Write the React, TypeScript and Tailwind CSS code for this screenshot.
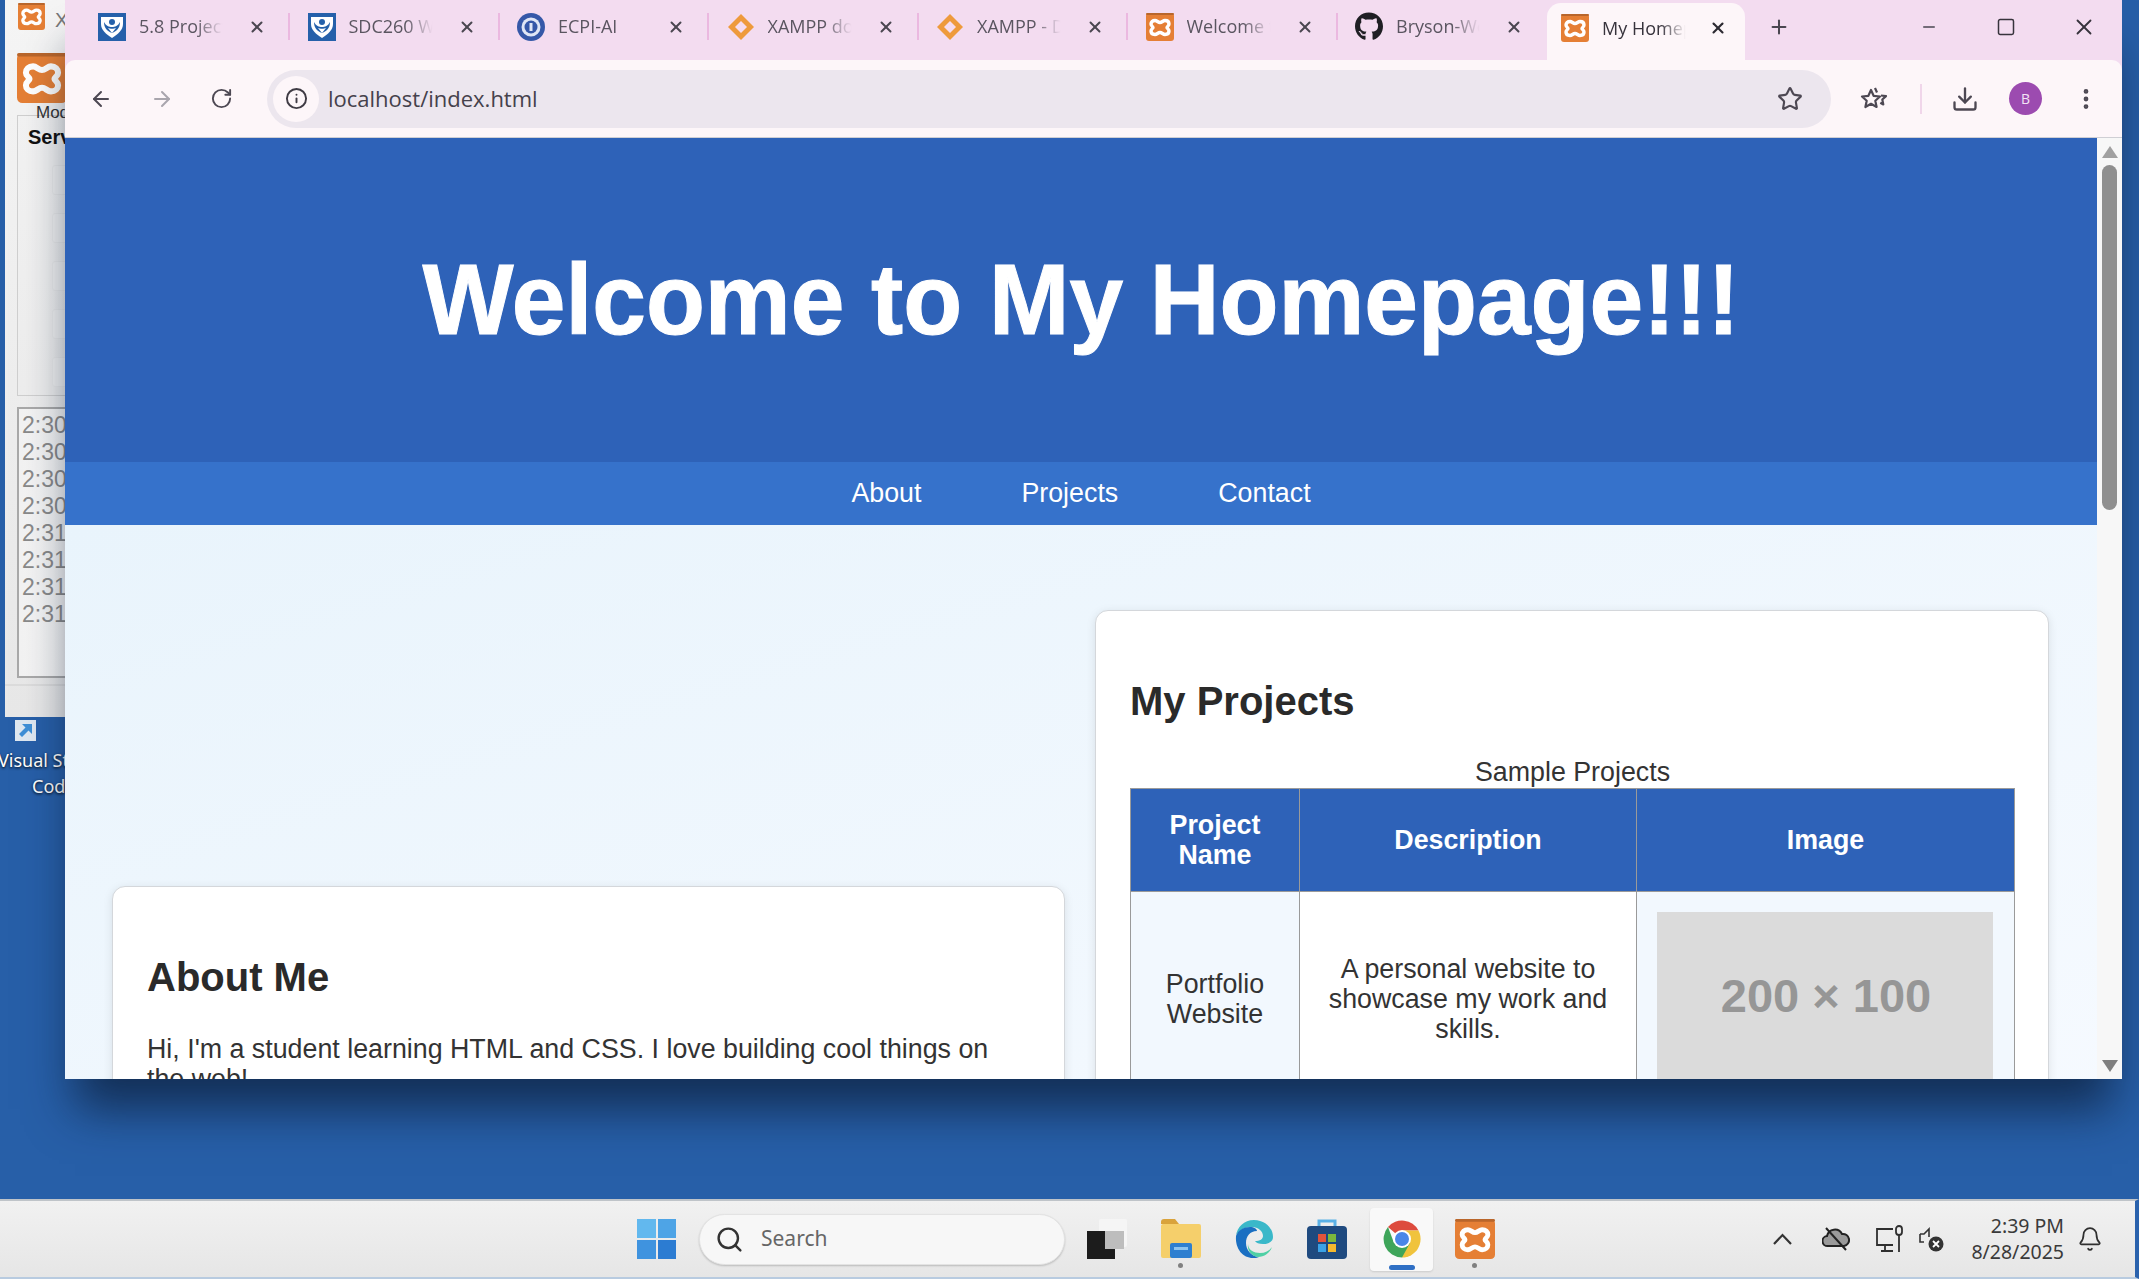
import { FaGithub } from 'react-icons/fa';
import { ArrowLeft, ArrowRight, Bell, Download, EllipsisVertical, Info, Minus, Plus, RotateCw, Search, Square, Star, X } from 'lucide-react';

function XamppLogo({ size = 28, className = '' }: { size?: number; className?: string }) {
    return (
        <svg width={size} height={size} viewBox="0 0 28 28" className={className}>
            <rect width="28" height="28" rx="3" fill="#e57f35" />
            <rect width="28" height="2" rx="1" fill="#b9662b" />
            <path
                d="M9 7.500C11 7.500 12 9.500 14 9.500S17 7.500 19 7.500C21.500 7.500 23 9 23 11 23 13 21 13.500 21 14.500S23 16 23 18C23 20 21.500 21.500 19 21.500 17 21.500 16 19.500 14 19.500S11 21.500 9 21.500C6.500 21.500 5 20 5 18 5 16 7 15.500 7 14.500S5 13 5 11C5 9 6.500 7.500 9 7.500Z"
                fill="#e57f35"
                stroke="#fff"
                strokeWidth="3.400"
            />
        </svg>
    );
}

function ShieldIcon() {
    return (
        <svg width="28" height="28" viewBox="0 0 28 28">
            <rect width="28" height="28" fill="#2560aa" />
            <path d="M3 4h22v7c0 6-5 10-11 14C8 21 3 17 3 11z" fill="#fff" />
            <circle cx="14" cy="9" r="3" fill="#2560aa" />
            <path d="M6 9c2 4 5 5 8 5s6-1 8-5c0 6-3 9-8 11-5-2-8-5-8-11z" fill="#2560aa" />
            <path d="M10 15c2 1 6 1 8 0l-4 5z" fill="#fff" />
        </svg>
    );
}

function EcpiIcon() {
    return (
        <svg width="28" height="28" viewBox="0 0 28 28">
            <circle cx="14" cy="14" r="14" fill="#3558a8" />
            <circle cx="14" cy="14" r="9.500" fill="#dfe6f5" />
            <circle cx="14" cy="14" r="6.500" fill="#3558a8" />
            <rect x="12.500" y="10" width="3" height="8" fill="#dfe6f5" />
        </svg>
    );
}

function DiamondIcon() {
    return (
        <svg width="28" height="28" viewBox="0 0 28 28">
            <path d="M14 1l13 13-13 13L1 14z" fill="#ee9a3c" />
            <path d="M14 8l6 6-6 6-6-6z" fill="#f5dcef" />
        </svg>
    );
}

const tabs = [
    { title: '5.8 Project', icon: <ShieldIcon /> },
    { title: 'SDC260 Week', icon: <ShieldIcon /> },
    { title: 'ECPI-AI', icon: <EcpiIcon /> },
    { title: 'XAMPP doc', icon: <DiamondIcon /> },
    { title: 'XAMPP - Download', icon: <DiamondIcon /> },
    { title: 'Welcome to', icon: <XamppLogo /> },
    { title: 'Bryson-Web', icon: <FaGithub size={29} className="text-[#1f1f24]" /> },
];

function Tab({ title, icon }: { title: string; icon: React.ReactNode }) {
    return (
        <div className="flex h-[53px] w-[190px] shrink-0 items-center">
            <div className="flex h-[28px] w-[28px] shrink-0 items-center justify-center">{icon}</div>
            <div className="ml-[13px] w-[91px] overflow-hidden whitespace-nowrap text-[18px] text-[#5a5560] [mask-image:linear-gradient(to_right,black_62%,transparent_92%)]">
                {title}
            </div>
            <X size={18} strokeWidth={2.6} className="ml-[18px] shrink-0 text-[#4a4650]" />
        </div>
    );
}

function TabStrip() {
    return (
        <div className="flex h-[60px] shrink-0 items-start pl-[33px]">
            {tabs.map((t, i) => (
                <div key={i} className="flex w-[209.5px] shrink-0 items-center">
                    <Tab title={t.title} icon={t.icon} />
                    {i < tabs.length - 1 && <div className="h-[27px] w-[2px] bg-[#ebb8e0]" />}
                </div>
            ))}
            <div className="-ml-[17.5px] mt-[3px] flex h-[57px] w-[198px] shrink-0 items-center rounded-t-[14px] bg-[#fdf6f9] pb-[7px] pl-[14px]">
                <XamppLogo />
                <div className="ml-[13px] w-[91px] overflow-hidden whitespace-nowrap text-[18px] text-[#37333c] [mask-image:linear-gradient(to_right,black_65%,transparent_92%)]">
                    My Homepage
                </div>
                <X size={18} strokeWidth={2.8} className="ml-[16px] shrink-0 text-[#2c2931]" />
            </div>
            <div className="flex h-[53px] items-center">
                <Plus size={22} strokeWidth={2.2} className="ml-[23px] text-[#4a4650]" />
                <Minus size={18} className="ml-[130px] text-[#4a4650]" />
                <Square size={20} strokeWidth={1.8} className="ml-[58px] text-[#37333c]" />
                <X size={26} strokeWidth={1.7} className="ml-[55px] text-[#37333c]" />
            </div>
        </div>
    );
}

function ReadingListIcon() {
    return (
        <svg width="30" height="28" viewBox="0 0 30 28" className="ml-[28px] shrink-0" fill="none" stroke="#4d4853" strokeWidth="2.200" strokeLinejoin="round">
            <path d="M12 5l2.600 5.800 6.400.7-4.700 4.200 1.300 6.300-5.600-3.200L6.400 22l1.300-6.300L3 11.500l6.400-.7z" />
            <path d="M16 3l2 4.500M22 10.500l5 .6-3.700 3.400 1 5-3-1.700" />
        </svg>
    );
}

function Toolbar() {
    return (
        <div className="flex h-[78px] shrink-0 items-center rounded-t-[10px] border-b border-b-[#cfcfd4] bg-[#fdf6f9] pl-[24px]">
            <ArrowLeft size={24} strokeWidth={2} className="text-[#4d4853]" />
            <ArrowRight size={24} strokeWidth={2} className="ml-[37px] text-[#a9a5ad]" />
            <RotateCw size={23} strokeWidth={2} className="ml-[36px] text-[#4d4853]" />
            <div className="ml-[34px] flex h-[58px] w-[1564px] shrink-0 items-center rounded-full bg-[#ece6ee] pl-[6px]">
                <div className="flex h-[46px] w-[46px] items-center justify-center rounded-full bg-[#fdf6f9]">
                    <Info size={23} strokeWidth={2} className="text-[#3f3b44]" />
                </div>
                <span className="ml-[9px] text-[22px] text-[#45414b]">localhost/index.html</span>
                <Star size={26} strokeWidth={2} className="ml-auto mr-[28px] text-[#4d4853]" />
            </div>
            <ReadingListIcon />
            <div className="ml-[31px] h-[30px] w-[2px] shrink-0 bg-[#f0d6ea]" />
            <Download size={28} strokeWidth={2} className="ml-[29px] shrink-0 text-[#4d4853]" />
            <div className="ml-[30px] flex h-[33px] w-[33px] shrink-0 items-center justify-center rounded-full bg-[#9c4bb0] text-[14px] text-[#f3e3f5]">B</div>
            <EllipsisVertical size={26} strokeWidth={2.4} className="ml-[31px] shrink-0 text-[#4d4853]" />
        </div>
    );
}

function Scrollbar() {
    return (
        <div className="flex w-[25px] shrink-0 flex-col items-center bg-[#f7f7f7] pt-[8px]">
            <div className="h-0 w-0 border-x-[8px] border-b-[12px] border-x-transparent border-b-[#a0a0a0]" />
            <div className="mt-[7px] h-[345px] w-[15px] rounded-full bg-[#8f8f8f]" />
            <div className="mb-[7px] mt-auto h-0 w-0 border-x-[8px] border-t-[12px] border-x-transparent border-t-[#7f7f7f]" />
        </div>
    );
}

function Card({ children, className }: { children: React.ReactNode; className: string }) {
    return (
        <section className={`h-fit rounded-[13px] border border-[#d4d7db] bg-white px-[34px] pt-[65px] pb-[30px] shadow-[0_2px_10px_rgba(0,0,0,0.1)] ${className}`}>
            {children}
        </section>
    );
}

function Page() {
    return (
        <div className="min-w-0 flex-1 overflow-hidden bg-[#eaf4fc] font-['Liberation_Sans',Arial,sans-serif] text-[#333333]">
            <header className="flex h-[324px] items-center justify-center bg-[#2e62b8]">
                <h1 className="scale-y-[1.04] text-[96.5px] font-bold leading-none text-white [-webkit-text-stroke:1px_white]">Welcome to My Homepage!!!</h1>
            </header>
            <nav className="flex h-[63px] items-center justify-center gap-[100px] bg-[#3672cb] text-[26.8px] text-white">
                <span>About</span>
                <span>Projects</span>
                <span>Contact</span>
            </nav>
            <main className="flex items-start gap-[30px] bg-gradient-to-br from-[#e9f4fc] to-[#f6faff] pl-[47px] pt-[85px]">
                <Card className="mt-[276px] w-[953px]">
                    <h2 className="text-[40px] font-bold leading-[50px] text-[#2a2a2a]">About Me</h2>
                    <p className="mt-[32px] text-[26.8px] leading-[30px]">Hi, I'm a student learning HTML and CSS. I love building cool things on the web!</p>
                </Card>
                <Card className="w-[954px]">
                    <h2 className="text-[40px] font-bold leading-[50px] text-[#2a2a2a]">My Projects</h2>
                    <table className="mt-[30px] w-[884px] table-fixed border-collapse text-center text-[26.8px] leading-[30px]">
                        <caption className="h-[32px] leading-[32px]">Sample Projects</caption>
                        <colgroup>
                            <col className="w-[169px]" />
                            <col className="w-[337px]" />
                            <col className="w-[378px]" />
                        </colgroup>
                        <thead>
                            <tr className="h-[103px] bg-[#2e62b8] font-bold text-white">
                                <th className="border border-[#9a9a9a] px-[20px]">Project Name</th>
                                <th className="border border-[#9a9a9a] px-[20px]">Description</th>
                                <th className="border border-[#9a9a9a] px-[20px]">Image</th>
                            </tr>
                        </thead>
                        <tbody>
                            <tr>
                                <td className="border border-[#9a9a9a] bg-[#f2f8fe] px-[20px] pt-[6px]">Portfolio Website</td>
                                <td className="border border-[#9a9a9a] bg-white px-[20px] pt-[6px]">A personal website to showcase my work and skills.</td>
                                <td className="border border-[#9a9a9a] bg-[#f2f8fe] p-[20px]">
                                    <div className="flex h-[168px] w-[336px] items-center justify-center bg-[#dbdbdb] pl-[2px] text-[47px] font-bold text-[#969696]">200 × 100</div>
                                </td>
                            </tr>
                        </tbody>
                    </table>
                </Card>
            </main>
        </div>
    );
}

function XamppWindow() {
    const times = ['2:30', '2:30', '2:30', '2:30', '2:31', '2:31', '2:31', '2:31'];
    return (
        <div className="absolute left-[5px] top-0 flex h-[717px] w-[200px] flex-col bg-gradient-to-b from-[#f5f5f5] to-[#e8e8e8] pt-[3px] font-['Liberation_Sans',sans-serif]">
            <div className="flex h-[50px] shrink-0 items-start pl-[13px]">
                <XamppLogo size={27} />
                <span className="ml-[10px] mt-[2px] text-[20px] text-[#777]">X</span>
            </div>
            <XamppLogo size={50} className="ml-[12px] shrink-0" />
            <div className="ml-[12px] mt-[12px] h-[281px] shrink-0 border-b border-l border-t border-[#cfcfcf]">
                <span className="-mt-[13px] ml-[18px] block text-[17px] leading-[20px] text-[#333]">Mod</span>
                <span className="ml-[10px] mt-[2px] block text-[20px] font-bold leading-[24px] text-[#111]">Serv</span>
                <div className="ml-[34px] mt-[16px] flex flex-col gap-[18px]">
                    {[0, 1, 2, 3, 4].map(i => (
                        <div key={i} className="h-[30px] w-[30px] rounded-[3px] border border-[#ebebeb] bg-[#f3f3f3]" />
                    ))}
                </div>
            </div>
            <div className="ml-[12px] mt-[11px] h-[271px] shrink-0 border-2 border-[#a9a9a9] bg-gradient-to-r from-[#f3f3f3] to-white pl-[3px] pt-[3px]">
                {times.map((t, i) => (
                    <div key={i} className="h-[27px] text-[23px] leading-[27px] text-[#8a8a8a]">{t}</div>
                ))}
            </div>
            <div className="mt-[6px] border-t-2 border-t-[#dcdcdc]" />
        </div>
    );
}

function Shortcut() {
    return (
        <div className="absolute left-0 top-[720px] w-[66px] overflow-hidden font-['Noto_Sans',sans-serif] text-[18px] leading-[26px] text-white [text-shadow:0_1px_3px_#000]">
            <div className="ml-[15px] flex h-[21px] w-[21px] items-center justify-center bg-[#dfe8f1]">
                <svg width="15" height="15" viewBox="0 0 15 15"><path d="M4 1h10v10l-3.500-3.500L4 14 1 11l6.500-6.500z" fill="#3f8fd6" /></svg>
            </div>
            <div className="-ml-[2px] mt-[6px] whitespace-nowrap">Visual Studio</div>
            <div className="ml-[32px] whitespace-nowrap">Code</div>
        </div>
    );
}

function BrowserWindow() {
    return (
        <div className="absolute left-[65px] top-0 flex h-[1079px] w-[2057px] flex-col overflow-hidden bg-[#f3dcf0] font-['Open_Sans',sans-serif] shadow-[0_40px_45px_-10px_rgba(10,25,50,0.7)]">
            <TabStrip />
            <Toolbar />
            <div className="flex min-h-0 flex-1">
                <Page />
                <Scrollbar />
            </div>
        </div>
    );
}

function ChromeIcon() {
    return (
        <svg width="40" height="40" viewBox="0 0 40 40">
            <path d="M20 20L6 8A18.500 18.500 0 0 1 36.500 11.500H20z" fill="#dd4b3e" />
            <path d="M20 38.500A18.500 18.500 0 0 0 36.500 11.500H20l-3 8z" fill="#f0c33c" />
            <path d="M6 8A18.500 18.500 0 0 0 20 38.500L28 24H12z" fill="#3ea55a" />
            <circle cx="20" cy="20" r="9" fill="#fff" />
            <circle cx="20" cy="20" r="7" fill="#4a86e8" />
        </svg>
    );
}

function EdgeIcon() {
    return (
        <svg width="40" height="40" viewBox="0 0 40 40">
            <path d="M20 1c11 0 19 8 19 17 0 5-5 7-10 7-4 0-7-1-8-3 5 0 8-2 8-5 0-5-5-9-11-9C9 8 3 13 2 17 3 8 10 1 20 1z" fill="#3ab8c9" />
            <path d="M2 17c2-6 8-9 14-9 4 0 7 2 7 4-7 0-11 5-11 12 0 7 5 13 13 14-2 1-4 1-6 1C9 39 1 30 2 17z" fill="#1a6fc2" />
            <path d="M14 25c0 6 6 9 12 9 5 0 9-2 12-6-2 6-8 10-14 10-7-1-11-7-10-13z" fill="#4fd0a5" />
        </svg>
    );
}

function StoreIcon() {
    return (
        <svg width="40" height="42" viewBox="0 0 40 42">
            <path d="M12 8V3h16v5" fill="none" stroke="#5bb1e6" strokeWidth="3" />
            <rect y="8" width="40" height="33" rx="4" fill="#1f4a7f" />
            <rect x="11" y="16" width="8" height="8" fill="#e2533b" />
            <rect x="21" y="16" width="8" height="8" fill="#7cb83c" />
            <rect x="11" y="26" width="8" height="8" fill="#3aa2e6" />
            <rect x="21" y="26" width="8" height="8" fill="#f5b92e" />
        </svg>
    );
}

function ExplorerIcon() {
    return (
        <svg width="40" height="40" viewBox="0 0 40 40">
            <path d="M0 3a3 3 0 0 1 3-3h11l4 5H0z" fill="#d9a33c" />
            <rect y="5" width="40" height="34" rx="2" fill="#f5cf6b" />
            <rect x="9" y="24" width="22" height="15" rx="2" fill="#2e7fd0" />
            <rect x="13" y="28" width="14" height="3" fill="#8cc4f0" />
        </svg>
    );
}

function TaskView() {
    return (
        <div className="relative h-[40px] w-[40px]">
            <div className="absolute right-0 top-0 h-[28px] w-[28px] rounded-[2px] bg-[#f5f5f5]" />
            <div className="absolute bottom-0 left-0 h-[28px] w-[28px] bg-[#1c1c1c]" />
            <div className="absolute right-[3px] top-[12px] h-[18px] w-[19px] bg-[#bdbdbd]" />
        </div>
    );
}

function Tray() {
    return (
        <div className="ml-auto flex items-center text-[#2f2f2f]">
            <svg width="19" height="12" viewBox="0 0 19 12" fill="none" stroke="#333" strokeWidth="2.200">
                <path d="M1 11l8.500-9 8.500 9" />
            </svg>
            <svg width="28" height="26" viewBox="0 0 28 26" className="ml-[30px]">
                <path d="M6 20a5 5 0 0 1-1-10 8 8 0 0 1 15-2 6 6 0 0 1 2 12z" fill="#9a9a9a" stroke="#222" strokeWidth="2" />
                <path d="M4 2l20 22" stroke="#222" strokeWidth="2" />
            </svg>
            <svg width="28" height="28" viewBox="0 0 28 28" fill="none" stroke="#2f2f2f" strokeWidth="1.800" className="ml-[26px]">
                <path d="M17 4H1v16h16M5 26h12M9 20v6" />
                <rect x="20" y="1" width="6" height="9" rx="3" />
                <path d="M23 10v17" />
            </svg>
            <svg width="25" height="25" viewBox="0 0 25 25" className="ml-[15px]">
                <path d="M1 7h4l5-5v8M1 7v8h4" fill="none" stroke="#333" strokeWidth="1.600" />
                <circle cx="17" cy="17" r="7.500" fill="#333" />
                <path d="M14 14l6 6M20 14l-6 6" stroke="#fff" strokeWidth="1.800" />
            </svg>
            <div className="ml-[27px] text-right text-[19.5px] leading-[26px] text-[#3a3a3a]">
                <div>2:39 PM</div>
                <div>8/28/2025</div>
            </div>
            <Bell size={26} strokeWidth={1.6} className="ml-[13px]" />
        </div>
    );
}

function Taskbar() {
    return (
        <div className="relative flex h-[80px] shrink-0 items-center border-b-2 border-r-4 border-t-2 border-b-[#b8cbe0] border-r-[#2a62ad] border-t-[#bfc4c9] bg-gradient-to-b from-[#f1f1f1] to-[#e6e6e6] pl-[637px] pr-[32px] font-['Noto_Sans',sans-serif]">
            <div className="grid h-[40px] w-[39px] grid-cols-2 gap-[2px]">
                <div className="bg-[#62b8ee]" />
                <div className="bg-[#4ea4e6]" />
                <div className="bg-[#3f93df]" />
                <div className="bg-[#2c7cd2]" />
            </div>
            <div className="ml-[23px] flex h-[51px] w-[366px] items-center rounded-full border border-[#e3e3e3] bg-[#f7f7f7] pl-[15px] shadow-[0_1px_2px_rgba(0,0,0,0.2)]">
                <Search size={29} strokeWidth={2} className="text-[#333]" />
                <span className="ml-[17px] text-[21px] text-[#666]">Search</span>
            </div>
            <div className="ml-[22px]"><TaskView /></div>
            <div className="relative ml-[34px]">
                <ExplorerIcon />
                <div className="absolute -bottom-[9px] left-[17px] h-[5px] w-[5px] rounded-full bg-[#808080]" />
            </div>
            <div className="ml-[33px]"><EdgeIcon /></div>
            <div className="ml-[33px]"><StoreIcon /></div>
            <div className="relative ml-[23px] flex h-[63px] w-[63px] items-center justify-center rounded-[4px] bg-[#f9f9f9] shadow-[0_1px_2px_rgba(0,0,0,0.12)]">
                <ChromeIcon />
                <div className="absolute bottom-[1px] left-[19px] h-[5px] w-[26px] rounded-full bg-[#2f6fc4]" />
            </div>
            <div className="relative ml-[22px]">
                <XamppLogo size={40} />
                <div className="absolute -bottom-[9px] left-[17px] h-[5px] w-[5px] rounded-full bg-[#808080]" />
            </div>
            <Tray />
        </div>
    );
}

export default function App() {
    return (
        <div className="flex h-screen w-full flex-col overflow-hidden bg-[#275fa8]">
            <div className="relative min-h-0 flex-1">
                <XamppWindow />
                <Shortcut />
                <BrowserWindow />
            </div>
            <Taskbar />
        </div>
    );
}
